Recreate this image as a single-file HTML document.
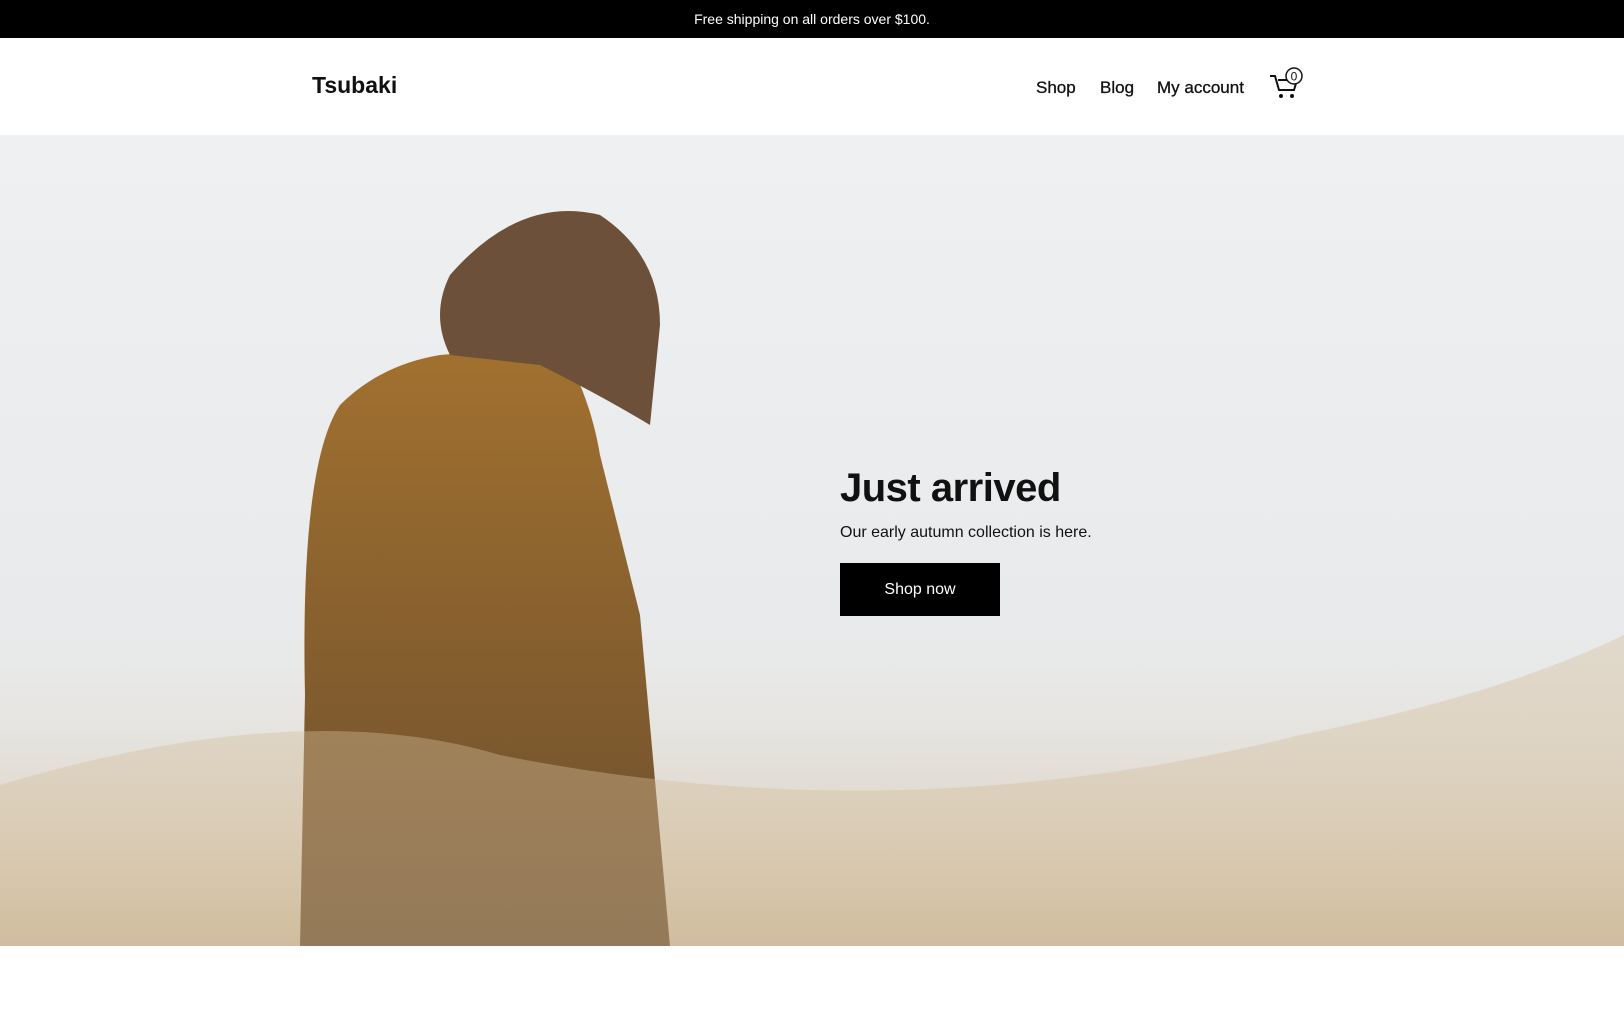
<!DOCTYPE html>
<html><head><meta charset="utf-8"><style>
*{margin:0;padding:0;box-sizing:border-box}
body{width:1624px;height:1022px;overflow:hidden;background:#fff;font-family:"Liberation Sans",sans-serif;color:#111}
.top{height:38px;background:#000;color:#fff;font-size:14px;text-align:center;line-height:38px}
.hdr{height:97px;position:relative}
.logo{position:absolute;left:312px;top:34px;font-size:23px;font-weight:bold}
.nav{position:absolute;top:40px;font-size:17px;-webkit-text-stroke:0.3px #111}
.hero{position:absolute;top:135px;left:0;width:1624px;height:811px;overflow:hidden;background:linear-gradient(180deg,#eef0f2 0%,#e9ebed 50%,#e6e6e4 100%)}
h1{position:absolute;left:840px;font-size:40px;font-weight:bold;letter-spacing:-0.5px}
.sub{position:absolute;left:840px;font-size:16px}
.btn{position:absolute;left:840px;width:160px;height:53px;background:#000;color:#fff;font-size:16px;text-align:center;line-height:53px}
</style></head><body>
<div class="top">Free shipping on all orders over $100.</div>
<div class="hdr">
<div class="logo">Tsubaki</div>
<div class="nav" style="left:1036px">Shop</div>
<div class="nav" style="left:1100px">Blog</div>
<div class="nav" style="left:1157px">My account</div>
<svg style="position:absolute;left:1268px;top:28px" width="40" height="34" viewBox="0 0 40 34">
<path d="M2 10h5l4 14h15l3-10H10" fill="none" stroke="#111" stroke-width="2"/>
<circle cx="13" cy="30" r="2" fill="#111"/><circle cx="24" cy="30" r="2" fill="#111"/>
<circle cx="26" cy="10" r="8" fill="#fff" stroke="#111" stroke-width="1.5"/>
<text x="26" y="14.5" font-size="12" text-anchor="middle" font-family="Liberation Sans" fill="#111">0</text>
</svg>
</div>
<div class="hero">
<svg width="1624" height="811" style="position:absolute;left:0;top:0">
<defs>
<linearGradient id="g" x1="0" y1="0" x2="0" y2="1"><stop offset="0" stop-color="#e8e4dc" stop-opacity="0"/><stop offset="1" stop-color="#c9b18c"/></linearGradient>
<linearGradient id="c" x1="0" y1="0" x2="0" y2="1"><stop offset="0" stop-color="#a2712f"/><stop offset="1" stop-color="#6a4d2e"/></linearGradient>
</defs>
<rect x="0" y="500" width="1624" height="311" fill="url(#g)" opacity="0.8"/>
<path d="M340 270 Q380 230 440 220 L560 210 Q590 260 600 320 L640 480 L670 811 L300 811 L305 560 Q300 330 340 270Z" fill="url(#c)"/>
<path d="M450 140 Q520 60 600 80 Q660 120 660 190 L650 290 Q600 260 540 230 L450 220 Q430 180 450 140Z" fill="#6d5039"/>
<path d="M0 811 L0 650 Q300 560 500 620 Q900 700 1300 600 Q1500 560 1624 500 L1624 811Z" fill="#d4bf9b" opacity="0.4"/>
</svg>
<h1 style="top:331px">Just arrived</h1>
<div class="sub" style="top:389px">Our early autumn collection is here.</div>
<div class="btn" style="top:428px">Shop now</div>
</div>
</body></html>
